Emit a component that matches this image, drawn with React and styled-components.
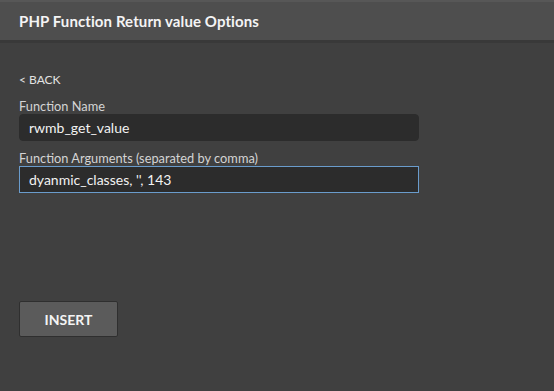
import React from "react";
import styled, { createGlobalStyle } from "styled-components";

const Global = createGlobalStyle`
  html, body {
    margin: 0;
    padding: 0;
    background: #404040;
  }
  body {
    font-family: Lato, "Open Sans", sans-serif;
  }
`;

const Panel = styled.div`
  width: 554px;
  height: 391px;
  background: #404040;
  display: flex;
  flex-direction: column;
`;

const Header = styled.div`
  height: 38px;
  background: #4e4e4e;
  border-top: 2px solid #575757;
  border-bottom: 3px solid #393939;
  display: flex;
  align-items: center;
  padding: 0 19px;
`;

const Title = styled.h1`
  margin: 0;
  font-size: 15px;
  font-weight: 700;
  color: #f4f4f4;
  letter-spacing: 0.1px;
`;

const Body = styled.div`
  flex: 1;
  padding: 30px 19px 0;
  display: flex;
  flex-direction: column;
  align-items: flex-start;
`;

const Back = styled.a`
  font-size: 12px;
  color: #e2e2e2;
  text-decoration: none;
  line-height: 14px;
  margin-bottom: 12px;
  cursor: pointer;
`;

const Label = styled.label`
  font-size: 12.8px;
  color: #d4d4d4;
  line-height: 15px;
`;

const Input = styled.input`
  box-sizing: border-box;
  width: 400px;
  height: 27px;
  margin: 0 0 10px;
  padding: 0 9px;
  font-family: inherit;
  font-size: 14px;
  color: #f2f2f2;
  background: #2c2c2c;
  border: 1px solid ${(p) => (p.$focused ? "#6a9ccc" : "#2c2c2c")};
  border-radius: ${(p) => (p.$focused ? "0" : "4px")};
  outline: none;
`;

const Button = styled.button`
  margin-top: 98px;
  width: 99px;
  height: 36px;
  background: #5b5b5b;
  border: 1px solid #2f2f2f;
  border-radius: 2px;
  color: #f4f4f4;
  font-family: inherit;
  font-size: 14px;
  font-weight: 700;
  cursor: pointer;
`;

export default function App() {
  return (
    <>
      <Global />
      <Panel>
        <Header>
          <Title>PHP Function Return value Options</Title>
        </Header>
        <Body>
          <Back>&lt; BACK</Back>
          <Label>Function Name</Label>
          <Input defaultValue="rwmb_get_value" />
          <Label>Function Arguments (separated by comma)</Label>
          <Input $focused defaultValue="dyanmic_classes, '', 143" />
          <Button>INSERT</Button>
        </Body>
      </Panel>
    </>
  );
}
